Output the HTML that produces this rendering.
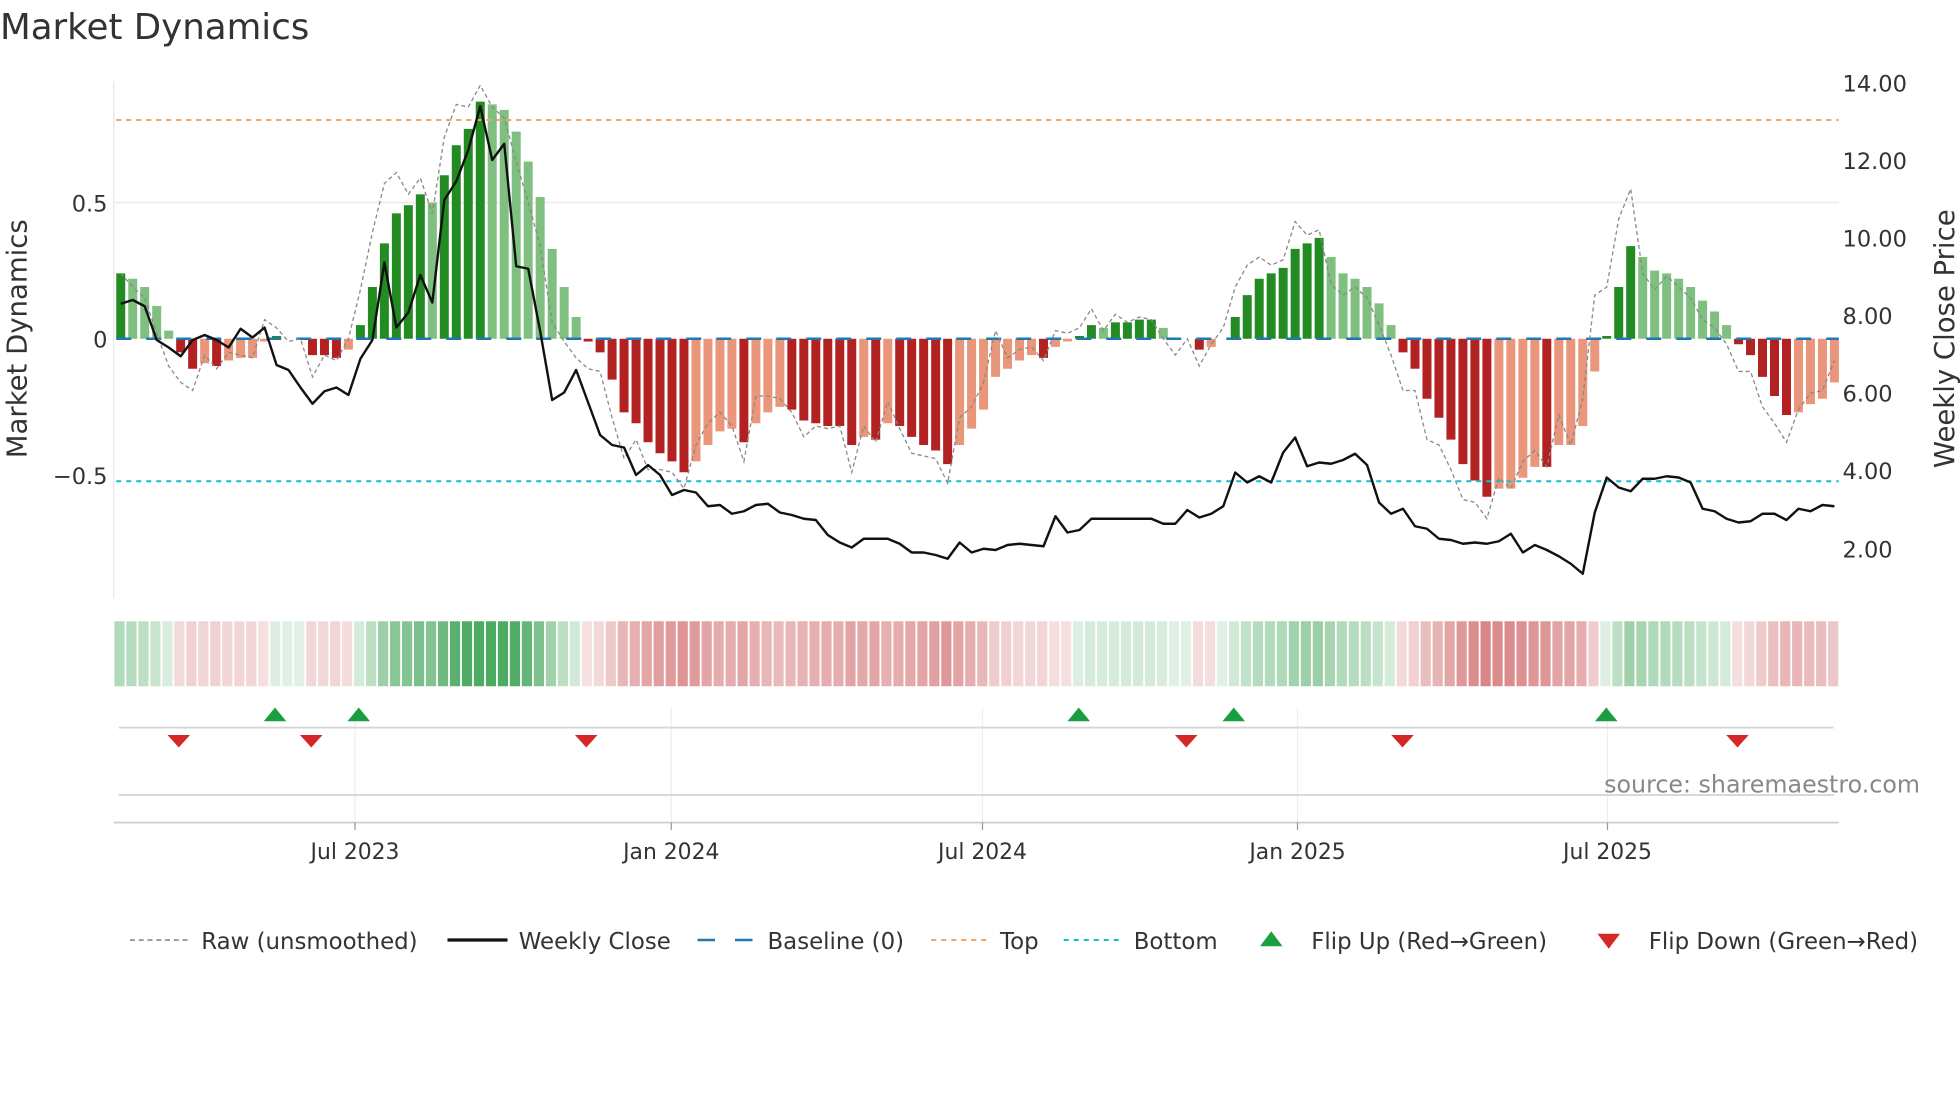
<!DOCTYPE html>
<html><head><meta charset="utf-8"><style>
html,body{margin:0;padding:0;background:#fff;}
svg{display:block;font-family:"DejaVu Sans","Liberation Sans",sans-serif;}
</style></head><body>
<svg width="1960" height="1102" viewBox="0 0 1568 881.6" xmlns="http://www.w3.org/2000/svg">
<rect width="1568" height="882" fill="#fff"/>
<text x="0" y="31" font-size="28.5" fill="#333">Market Dynamics</text>
<line x1="91" y1="65" x2="91" y2="478" stroke="#e6e6e6" stroke-width="1"/>
<line x1="91" y1="162" x2="1471" y2="162" stroke="#eeeeee" stroke-width="1.5"/>
<g transform="translate(93,271) scale(9.587,-218)">
<path fill="#228b22" d="M0 0h.75V.24H0zM13 0h.75V.01H13zM20 0h.75V.05H20zM21 0h.75V.19H21zM22 0h.75V.35H22zM23 0h.75V.46H23zM24 0h.75V.49H24zM25 0h.75V.53H25zM27 0h.75V.6H27zM28 0h.75V.71H28zM29 0h.75V.77H29zM30 0h.75V.87H30zM80 0h.75V.01H80zM81 0h.75V.05H81zM83 0h.75V.06H83zM84 0h.75V.06H84zM85 0h.75V.07H85zM86 0h.75V.07H86zM93 0h.75V.08H93zM94 0h.75V.16H94zM95 0h.75V.22H95zM96 0h.75V.24H96zM97 0h.75V.26H97zM98 0h.75V.33H98zM99 0h.75V.35H99zM100 0h.75V.37H100zM124 0h.75V.01H124zM125 0h.75V.19H125zM126 0h.75V.34H126z"/>
<path fill="#7fbf7f" d="M1 0h.75V.22H1zM2 0h.75V.19H2zM3 0h.75V.12H3zM4 0h.75V.03H4zM26 0h.75V.5H26zM31 0h.75V.86H31zM32 0h.75V.84H32zM33 0h.75V.76H33zM34 0h.75V.65H34zM35 0h.75V.52H35zM36 0h.75V.33H36zM37 0h.75V.19H37zM38 0h.75V.08H38zM82 0h.75V.04H82zM87 0h.75V.04H87zM101 0h.75V.30H101zM102 0h.75V.24H102zM103 0h.75V.22H103zM104 0h.75V.19H104zM105 0h.75V.13H105zM106 0h.75V.05H106zM127 0h.75V.30H127zM128 0h.75V.25H128zM129 0h.75V.24H129zM130 0h.75V.22H130zM131 0h.75V.19H131zM132 0h.75V.14H132zM133 0h.75V.10H133zM134 0h.75V.05H134z"/>
<path fill="#b22222" d="M5 0h.75V-.05H5zM6 0h.75V-.11H6zM8 0h.75V-.10H8zM16 0h.75V-.06H16zM17 0h.75V-.06H17zM18 0h.75V-.07H18zM39 0h.75V-.01H39zM40 0h.75V-.05H40zM41 0h.75V-.15H41zM42 0h.75V-.27H42zM43 0h.75V-.31H43zM44 0h.75V-.38H44zM45 0h.75V-.42H45zM46 0h.75V-.45H46zM47 0h.75V-.49H47zM52 0h.75V-.38H52zM56 0h.75V-.26H56zM57 0h.75V-.30H57zM58 0h.75V-.31H58zM59 0h.75V-.32H59zM60 0h.75V-.32H60zM61 0h.75V-.39H61zM63 0h.75V-.37H63zM65 0h.75V-.32H65zM66 0h.75V-.36H66zM67 0h.75V-.39H67zM68 0h.75V-.41H68zM69 0h.75V-.46H69zM77 0h.75V-.07H77zM90 0h.75V-.04H90zM107 0h.75V-.05H107zM108 0h.75V-.11H108zM109 0h.75V-.22H109zM110 0h.75V-.29H110zM111 0h.75V-.37H111zM112 0h.75V-.46H112zM113 0h.75V-.52H113zM114 0h.75V-.58H114zM119 0h.75V-.47H119zM135 0h.75V-.02H135zM136 0h.75V-.06H136zM137 0h.75V-.14H137zM138 0h.75V-.21H138zM139 0h.75V-.28H139z"/>
<path fill="#e9967a" d="M7 0h.75V-.09H7zM9 0h.75V-.08H9zM10 0h.75V-.07H10zM11 0h.75V-.07H11zM12 0h.75V-.01H12zM19 0h.75V-.04H19zM48 0h.75V-.45H48zM49 0h.75V-.39H49zM50 0h.75V-.34H50zM51 0h.75V-.33H51zM53 0h.75V-.31H53zM54 0h.75V-.27H54zM55 0h.75V-.25H55zM62 0h.75V-.36H62zM64 0h.75V-.31H64zM70 0h.75V-.39H70zM71 0h.75V-.33H71zM72 0h.75V-.26H72zM73 0h.75V-.14H73zM74 0h.75V-.11H74zM75 0h.75V-.08H75zM76 0h.75V-.06H76zM78 0h.75V-.03H78zM79 0h.75V-.01H79zM91 0h.75V-.03H91zM115 0h.75V-.55H115zM116 0h.75V-.55H116zM117 0h.75V-.51H117zM118 0h.75V-.47H118zM120 0h.75V-.39H120zM121 0h.75V-.39H121zM122 0h.75V-.32H122zM123 0h.75V-.12H123zM140 0h.75V-.27H140zM141 0h.75V-.24H141zM142 0h.75V-.22H142zM143 0h.75V-.16H143z"/>
</g>
<g transform="translate(91.5,0) scale(9.587,1)">
<g fill="#2e9b48">
<rect x="0" y="497" width=".85" height="52" fill-opacity=".37"/><rect x="1" y="497" width=".85" height="52" fill-opacity=".35"/><rect x="2" y="497" width=".85" height="52" fill-opacity=".32"/><rect x="3" y="497" width=".85" height="52" fill-opacity=".26"/><rect x="4" y="497" width=".85" height="52" fill-opacity=".18"/>
<rect x="13" y="497" width=".85" height="52" fill-opacity=".16"/><rect x="14" y="497" width=".85" height="52" fill-opacity=".15"/><rect x="15" y="497" width=".85" height="52" fill-opacity=".15"/>
<rect x="20" y="497" width=".85" height="52" fill-opacity=".2"/><rect x="21" y="497" width=".85" height="52" fill-opacity=".32"/><rect x="22" y="497" width=".85" height="52" fill-opacity=".47"/><rect x="23" y="497" width=".85" height="52" fill-opacity=".56"/><rect x="24" y="497" width=".85" height="52" fill-opacity=".59"/><rect x="25" y="497" width=".85" height="52" fill-opacity=".63"/><rect x="26" y="497" width=".85" height="52" fill-opacity=".6"/><rect x="27" y="497" width=".85" height="52" fill-opacity=".69"/><rect x="28" y="497" width=".85" height="52" fill-opacity=".79"/><rect x="29" y="497" width=".85" height="52" fill-opacity=".84"/><rect x="30" y="497" width=".85" height="52" fill-opacity=".85"/><rect x="31" y="497" width=".85" height="52" fill-opacity=".85"/><rect x="32" y="497" width=".85" height="52" fill-opacity=".85"/><rect x="33" y="497" width=".85" height="52" fill-opacity=".83"/><rect x="34" y="497" width=".85" height="52" fill-opacity=".74"/><rect x="35" y="497" width=".85" height="52" fill-opacity=".62"/><rect x="36" y="497" width=".85" height="52" fill-opacity=".45"/><rect x="37" y="497" width=".85" height="52" fill-opacity=".32"/><rect x="38" y="497" width=".85" height="52" fill-opacity=".22"/>
<rect x="80" y="497" width=".85" height="52" fill-opacity=".16"/><rect x="81" y="497" width=".85" height="52" fill-opacity=".2"/><rect x="82" y="497" width=".85" height="52" fill-opacity=".19"/><rect x="83" y="497" width=".85" height="52" fill-opacity=".2"/><rect x="84" y="497" width=".85" height="52" fill-opacity=".2"/><rect x="85" y="497" width=".85" height="52" fill-opacity=".21"/><rect x="86" y="497" width=".85" height="52" fill-opacity=".21"/><rect x="87" y="497" width=".85" height="52" fill-opacity=".19"/><rect x="88" y="497" width=".85" height="52" fill-opacity=".15"/><rect x="89" y="497" width=".85" height="52" fill-opacity=".15"/>
<rect x="92" y="497" width=".85" height="52" fill-opacity=".15"/><rect x="93" y="497" width=".85" height="52" fill-opacity=".22"/><rect x="94" y="497" width=".85" height="52" fill-opacity=".29"/><rect x="95" y="497" width=".85" height="52" fill-opacity=".35"/><rect x="96" y="497" width=".85" height="52" fill-opacity=".37"/><rect x="97" y="497" width=".85" height="52" fill-opacity=".38"/><rect x="98" y="497" width=".85" height="52" fill-opacity=".45"/><rect x="99" y="497" width=".85" height="52" fill-opacity=".47"/><rect x="100" y="497" width=".85" height="52" fill-opacity=".48"/><rect x="101" y="497" width=".85" height="52" fill-opacity=".42"/><rect x="102" y="497" width=".85" height="52" fill-opacity=".37"/><rect x="103" y="497" width=".85" height="52" fill-opacity=".35"/><rect x="104" y="497" width=".85" height="52" fill-opacity=".32"/><rect x="105" y="497" width=".85" height="52" fill-opacity=".27"/><rect x="106" y="497" width=".85" height="52" fill-opacity=".2"/>
<rect x="124" y="497" width=".85" height="52" fill-opacity=".16"/><rect x="125" y="497" width=".85" height="52" fill-opacity=".32"/><rect x="126" y="497" width=".85" height="52" fill-opacity=".46"/><rect x="127" y="497" width=".85" height="52" fill-opacity=".42"/><rect x="128" y="497" width=".85" height="52" fill-opacity=".38"/><rect x="129" y="497" width=".85" height="52" fill-opacity=".37"/><rect x="130" y="497" width=".85" height="52" fill-opacity=".35"/><rect x="131" y="497" width=".85" height="52" fill-opacity=".32"/><rect x="132" y="497" width=".85" height="52" fill-opacity=".28"/><rect x="133" y="497" width=".85" height="52" fill-opacity=".24"/><rect x="134" y="497" width=".85" height="52" fill-opacity=".2"/>
</g>
<g fill="#c0393b">
<rect x="5" y="497" width=".85" height="52" fill-opacity=".19"/><rect x="6" y="497" width=".85" height="52" fill-opacity=".24"/><rect x="7" y="497" width=".85" height="52" fill-opacity=".22"/><rect x="8" y="497" width=".85" height="52" fill-opacity=".23"/><rect x="9" y="497" width=".85" height="52" fill-opacity=".21"/><rect x="10" y="497" width=".85" height="52" fill-opacity=".21"/><rect x="11" y="497" width=".85" height="52" fill-opacity=".21"/><rect x="12" y="497" width=".85" height="52" fill-opacity=".16"/>
<rect x="16" y="497" width=".85" height="52" fill-opacity=".2"/><rect x="17" y="497" width=".85" height="52" fill-opacity=".2"/><rect x="18" y="497" width=".85" height="52" fill-opacity=".21"/><rect x="19" y="497" width=".85" height="52" fill-opacity=".18"/>
<rect x="39" y="497" width=".85" height="52" fill-opacity=".15"/><rect x="40" y="497" width=".85" height="52" fill-opacity=".19"/><rect x="41" y="497" width=".85" height="52" fill-opacity=".27"/><rect x="42" y="497" width=".85" height="52" fill-opacity=".37"/><rect x="43" y="497" width=".85" height="52" fill-opacity=".4"/><rect x="44" y="497" width=".85" height="52" fill-opacity=".45"/><rect x="45" y="497" width=".85" height="52" fill-opacity=".49"/><rect x="46" y="497" width=".85" height="52" fill-opacity=".51"/><rect x="47" y="497" width=".85" height="52" fill-opacity=".54"/><rect x="48" y="497" width=".85" height="52" fill-opacity=".51"/><rect x="49" y="497" width=".85" height="52" fill-opacity=".46"/><rect x="50" y="497" width=".85" height="52" fill-opacity=".42"/><rect x="51" y="497" width=".85" height="52" fill-opacity=".41"/><rect x="52" y="497" width=".85" height="52" fill-opacity=".45"/><rect x="53" y="497" width=".85" height="52" fill-opacity=".4"/><rect x="54" y="497" width=".85" height="52" fill-opacity=".37"/><rect x="55" y="497" width=".85" height="52" fill-opacity=".35"/><rect x="56" y="497" width=".85" height="52" fill-opacity=".36"/><rect x="57" y="497" width=".85" height="52" fill-opacity=".39"/><rect x="58" y="497" width=".85" height="52" fill-opacity=".4"/><rect x="59" y="497" width=".85" height="52" fill-opacity=".41"/><rect x="60" y="497" width=".85" height="52" fill-opacity=".41"/><rect x="61" y="497" width=".85" height="52" fill-opacity=".46"/><rect x="62" y="497" width=".85" height="52" fill-opacity=".44"/><rect x="63" y="497" width=".85" height="52" fill-opacity=".45"/><rect x="64" y="497" width=".85" height="52" fill-opacity=".4"/><rect x="65" y="497" width=".85" height="52" fill-opacity=".41"/><rect x="66" y="497" width=".85" height="52" fill-opacity=".44"/><rect x="67" y="497" width=".85" height="52" fill-opacity=".46"/><rect x="68" y="497" width=".85" height="52" fill-opacity=".48"/><rect x="69" y="497" width=".85" height="52" fill-opacity=".52"/><rect x="70" y="497" width=".85" height="52" fill-opacity=".46"/><rect x="71" y="497" width=".85" height="52" fill-opacity=".41"/><rect x="72" y="497" width=".85" height="52" fill-opacity=".36"/><rect x="73" y="497" width=".85" height="52" fill-opacity=".26"/><rect x="74" y="497" width=".85" height="52" fill-opacity=".24"/><rect x="75" y="497" width=".85" height="52" fill-opacity=".21"/><rect x="76" y="497" width=".85" height="52" fill-opacity=".2"/><rect x="77" y="497" width=".85" height="52" fill-opacity=".21"/><rect x="78" y="497" width=".85" height="52" fill-opacity=".17"/><rect x="79" y="497" width=".85" height="52" fill-opacity=".16"/>
<rect x="90" y="497" width=".85" height="52" fill-opacity=".18"/><rect x="91" y="497" width=".85" height="52" fill-opacity=".17"/>
<rect x="107" y="497" width=".85" height="52" fill-opacity=".19"/><rect x="108" y="497" width=".85" height="52" fill-opacity=".24"/><rect x="109" y="497" width=".85" height="52" fill-opacity=".33"/><rect x="110" y="497" width=".85" height="52" fill-opacity=".38"/><rect x="111" y="497" width=".85" height="52" fill-opacity=".45"/><rect x="112" y="497" width=".85" height="52" fill-opacity=".52"/><rect x="113" y="497" width=".85" height="52" fill-opacity=".57"/><rect x="114" y="497" width=".85" height="52" fill-opacity=".61"/><rect x="115" y="497" width=".85" height="52" fill-opacity=".59"/><rect x="116" y="497" width=".85" height="52" fill-opacity=".59"/><rect x="117" y="497" width=".85" height="52" fill-opacity=".56"/><rect x="118" y="497" width=".85" height="52" fill-opacity=".53"/><rect x="119" y="497" width=".85" height="52" fill-opacity=".53"/><rect x="120" y="497" width=".85" height="52" fill-opacity=".46"/><rect x="121" y="497" width=".85" height="52" fill-opacity=".46"/><rect x="122" y="497" width=".85" height="52" fill-opacity=".41"/><rect x="123" y="497" width=".85" height="52" fill-opacity=".25"/>
<rect x="135" y="497" width=".85" height="52" fill-opacity=".17"/><rect x="136" y="497" width=".85" height="52" fill-opacity=".2"/><rect x="137" y="497" width=".85" height="52" fill-opacity=".26"/><rect x="138" y="497" width=".85" height="52" fill-opacity=".32"/><rect x="139" y="497" width=".85" height="52" fill-opacity=".37"/><rect x="140" y="497" width=".85" height="52" fill-opacity=".37"/><rect x="141" y="497" width=".85" height="52" fill-opacity=".34"/><rect x="142" y="497" width=".85" height="52" fill-opacity=".33"/><rect x="143" y="497" width=".85" height="52" fill-opacity=".28"/>
</g>
</g>
<line x1="93" y1="271" x2="1471" y2="271" stroke="#1f77b4" stroke-width="2" stroke-dasharray="12,12"/>
<line x1="93" y1="96" x2="1471" y2="96" stroke="#f4a460" stroke-width="1.6" stroke-dasharray="4,4"/>
<line x1="93" y1="385" x2="1471" y2="385" stroke="#17becf" stroke-width="1.6" stroke-dasharray="4,4"/>
<g transform="translate(96.6,271) scale(9.587,-218)">
<path fill="none" stroke="#888" stroke-width="1.3" stroke-dasharray="4,3" vector-effect="non-scaling-stroke" d="M0 .24L1 .19L2 .15L3 .02L4 -.10L5 -.16L6 -.19L7 -.06L8 -.11L9 -.05L10 -.06L11 -.07L12 .07L13 .04L14 -.01L15 0L16 -.14L17 -.06L18 -.08L19 0L20 .18L21 .39L22 .57L23 .61L24 .53L25 .59L26 .46L27 .74L28 .86L29 .85L30 .93L31 .85L32 .81L33 .65L34 .50L35 .34L36 .06L37 -.01L38 -.07L39 -.11L40 -.12L41 -.29L42 -.44L43 -.37L44 -.48L45 -.48L46 -.49L47 -.55L48 -.39L49 -.31L50 -.27L51 -.32L52 -.45L53 -.21L54 -.21L55 -.22L56 -.27L57 -.36L58 -.32L59 -.33L60 -.32L61 -.49L62 -.32L63 -.38L64 -.23L65 -.33L66 -.42L67 -.43L68 -.44L69 -.53L70 -.29L71 -.25L72 -.16L73 .03L74 -.07L75 -.04L76 -.03L77 -.08L78 .03L79 .02L80 .04L81 .11L82 .03L83 .09L84 .06L85 .08L86 .07L87 0L88 -.06L89 0L90 -.10L91 -.02L92 .04L93 .19L94 .27L95 .30L96 .27L97 .29L98 .43L99 .38L100 .40L101 .20L102 .16L103 .19L104 .15L105 .05L106 -.06L107 -.19L108 -.19L109 -.37L110 -.39L111 -.48L112 -.59L113 -.60L114 -.66L115 -.51L116 -.55L117 -.45L118 -.41L119 -.47L120 -.28L121 -.39L122 -.22L123 .16L124 .19L125 .44L126 .55L127 .24L128 .18L129 .23L130 .19L131 .15L132 .07L133 .04L134 -.02L135 -.12L136 -.12L137 -.25L138 -.31L139 -.38L140 -.26L141 -.20L142 -.19L143 -.08"/>
</g>
<g transform="translate(96.6,0) scale(9.587,1)">
<path fill="none" stroke="#111" stroke-width="2.4" stroke-linejoin="round" vector-effect="non-scaling-stroke" d="M0 243L1 240L2 245L3 272L4 278L5 285L6 272L7 268L8 272L9 278L10 263L11 270L12 262L13 292L14 296L15 310L16 323L17 313L18 310L19 316L20 287L21 272L22 210L23 262L24 250L25 220L26 242L27 160L28 145L29 120L30 85L31 128L32 115L33 213L34 215L35 265L36 320L37 314L38 296L39 322L40 348L41 356L42 358L43 380L44 372L45 380L46 396L47 392L48 394L49 405L50 404L51 411L52 409L53 404L54 403L55 410L56 412L57 415L58 416L59 428L60 434L61 438L62 431L63 431L64 431L65 435L66 442L67 442L68 444L69 447L70 434L71 442L72 439L73 440L74 436L75 435L76 436L77 437L78 413L79 426L80 424L81 415L82 415L83 415L84 415L85 415L86 415L87 419L88 419L89 408L90 414L91 411L92 405L93 378L94 386L95 381L96 386L97 362L98 350L99 373L100 370L101 371L102 368L103 363L104 372L105 402L106 411L107 407L108 421L109 423L110 431L111 432L112 435L113 434L114 435L115 433L116 427L117 442L118 436L119 440L120 445L121 451L122 459L123 410L124 382L125 390L126 393L127 383L128 383L129 381L130 382L131 386L132 407L133 409L134 415L135 418L136 417L137 411L138 411L139 416L140 407L141 409L142 404L143 405"/>
</g>
<g font-size="18" fill="#333">
<text x="86" y="169" text-anchor="end">0.5</text>
<text x="86" y="278" text-anchor="end">0</text>
<text x="86" y="387" text-anchor="end">−0.5</text>
<text x="1474" y="73">14.00</text><text x="1474" y="135">12.00</text><text x="1474" y="197">10.00</text>
<text x="1474" y="259">8.00</text><text x="1474" y="321">6.00</text><text x="1474" y="383">4.00</text><text x="1474" y="446">2.00</text>
</g>
<text transform="translate(21,271) rotate(-90)" font-size="22" fill="#333" text-anchor="middle">Market Dynamics</text>
<text transform="translate(1563,271) rotate(-90)" font-size="22" fill="#333" text-anchor="middle">Weekly Close Price</text>
<g stroke="#eee" stroke-width="1">
<line x1="284" y1="566" x2="284" y2="658"/><line x1="537" y1="566" x2="537" y2="658"/><line x1="786" y1="566" x2="786" y2="658"/><line x1="1038" y1="566" x2="1038" y2="658"/><line x1="1286" y1="566" x2="1286" y2="658"/>
</g>
<line x1="95" y1="582" x2="1467" y2="582" stroke="#d6d6d6" stroke-width="1.5"/>
<line x1="95" y1="636" x2="1467" y2="636" stroke="#d6d6d6" stroke-width="1.5"/>
<line x1="91" y1="658" x2="1471" y2="658" stroke="#d0d0d0" stroke-width="1.5"/>
<g stroke="#999" stroke-width="1"><line x1="284" y1="658" x2="284" y2="664"/><line x1="537" y1="658" x2="537" y2="664"/><line x1="786" y1="658" x2="786" y2="664"/><line x1="1038" y1="658" x2="1038" y2="664"/><line x1="1286" y1="658" x2="1286" y2="664"/></g>
<g font-size="17.5" fill="#333" text-anchor="middle">
<text x="284" y="687">Jul 2023</text><text x="537" y="687">Jan 2024</text><text x="786" y="687">Jul 2024</text><text x="1038" y="687">Jan 2025</text><text x="1286" y="687">Jul 2025</text>
</g>
<g fill="#1a9e3f">
<polygon points="211,577 229,577 220,566"/><polygon points="278,577 296,577 287,566"/><polygon points="854,577 872,577 863,566"/><polygon points="978,577 996,577 987,566"/><polygon points="1276,577 1294,577 1285,566"/>
</g>
<g fill="#d62728">
<polygon points="134,588 152,588 143,598"/><polygon points="240,588 258,588 249,598"/><polygon points="460,588 478,588 469,598"/><polygon points="940,588 958,588 949,598"/><polygon points="1113,588 1131,588 1122,598"/><polygon points="1381,588 1399,588 1390,598"/>
</g>
<text x="1536" y="634" font-size="19" fill="#888" text-anchor="end">source: sharemaestro.com</text>
<g font-size="18.3" fill="#333">
<line x1="104" y1="752" x2="150" y2="752" stroke="#888" stroke-width="1.3" stroke-dasharray="4,3"/>
<text x="161" y="759">Raw (unsmoothed)</text>
<line x1="358" y1="752" x2="406" y2="752" stroke="#111" stroke-width="2.6"/>
<text x="415" y="759">Weekly Close</text>
<line x1="558" y1="752" x2="572" y2="752" stroke="#1f77b4" stroke-width="2"/>
<line x1="588" y1="752" x2="602" y2="752" stroke="#1f77b4" stroke-width="2"/>
<text x="614" y="759">Baseline (0)</text>
<line x1="745" y1="752" x2="789" y2="752" stroke="#f4a460" stroke-width="1.6" stroke-dasharray="4,4"/>
<text x="800" y="759">Top</text>
<line x1="851" y1="752" x2="895" y2="752" stroke="#17becf" stroke-width="1.6" stroke-dasharray="4,4"/>
<text x="907" y="759">Bottom</text>
<polygon points="1008,757 1026,757 1017,745" fill="#1a9e3f"/>
<text x="1049" y="759">Flip Up (Red→Green)</text>
<polygon points="1278,747 1296,747 1287,759" fill="#d62728"/>
<text x="1319" y="759">Flip Down (Green→Red)</text>
</g>
</svg>
</body></html>
